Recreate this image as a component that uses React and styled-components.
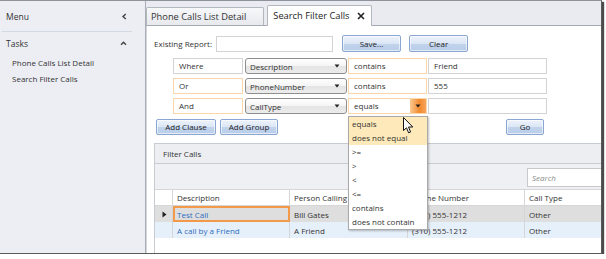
import React from "react";
import styled, { createGlobalStyle, css } from "styled-components";

const GlobalStyle = createGlobalStyle`
  html, body { margin: 0; padding: 0; background: #ffffff; }
  body { font-family: "Open Sans", "Noto Sans", "Liberation Sans", sans-serif; font-size: 8px; color: #333; }
  * { box-sizing: border-box; }
`;

const Frame = styled.div`
  width: 602px;
  height: 254px;
  display: flex;
  border-top: 1px solid #8e939b;
  border-right: 1px solid #5a5a5a;
  border-bottom: 1px solid #5a5a5a;
  box-shadow: 2px 2px 1px 0 rgba(30, 30, 30, 0.8);
  position: relative;
`;

const Sidebar = styled.aside`
  width: 146px;
  flex: none;
  background: #eceef3;
  border-right: 1px solid #a9adb5;
  display: flex;
  flex-direction: column;
`;

const SideHeader = styled.div`
  height: 31px;
  margin: 0 13px 0 2px;
  padding: 0 4px;
  display: flex;
  align-items: center;
  justify-content: space-between;
  border-bottom: 1px solid #d3d9e3;
  font-size: 8.5px;
  color: #333;
`;

const SideSection = styled.div`
  height: 22px;
  margin: 0 13px 0 2px;
  padding: 0 5px 0 4px;
  display: flex;
  align-items: center;
  justify-content: space-between;
  font-size: 8.5px;
  color: #333;
`;

const SideItems = styled.ul`
  list-style: none;
  margin: 1px 0 0;
  padding: 0 0 0 12px;
  display: flex;
  flex-direction: column;
`;

const SideItem = styled.li`
  height: 16px;
  line-height: 16px;
  font-size: 8px;
  color: #333;
`;

const Main = styled.main`
  flex: 1;
  display: flex;
  flex-direction: column;
  min-width: 0;
`;

const TabStrip = styled.div`
  height: 25px;
  flex: none;
  background: #e9ebf0;
  border-bottom: 1px solid #a6aab2;
  display: flex;
  align-items: flex-end;
  gap: 3px;
`;

const Tab = styled.div`
  height: 18px;
  display: flex;
  align-items: center;
  gap: 7px;
  padding: 0 17px 0 4px;
  font-size: 9.3px;
  color: #333;
  border: 1px solid #b3b7be;
  border-bottom: none;
  border-radius: 2px 2px 0 0;
  background: linear-gradient(#f7f8fa, #e7e9ed);
  ${(p) =>
    p.$active &&
    css`
      height: 21px;
      margin-bottom: -1px;
      padding: 0 6px 1px 5px;
      background: #ffffff;
      color: #222;
    `}
`;

const Content = styled.section`
  flex: 1;
  background: #ffffff;
  border-left: 1px solid #d2d6dc;
  display: flex;
  flex-direction: column;
  padding: 9px 0 0 7px;
  min-height: 0;
`;

const ReportRow = styled.div`
  height: 17px;
  display: flex;
  align-items: center;
`;

const Label = styled.span`
  font-size: 8px;
  color: #333;
  margin-right: 4px;
`;

const TextBox = styled.div`
  width: ${(p) => p.$w}px;
  height: 16px;
  flex: none;
  border: 1px solid ${(p) => (p.$accent ? "#fcd6ab" : "#d3d3d3")};
  background: #fff;
  padding: 0 5px;
  font-size: 8px;
  line-height: 14px;
  color: #333;
  white-space: nowrap;
  overflow: hidden;
`;

const BlueButton = styled.button`
  width: ${(p) => p.$w}px;
  height: ${(p) => p.$h || 16}px;
  flex: none;
  margin-left: ${(p) => p.$ml || 0}px;
  border: 1px solid #8aa7d4;
  border-radius: 2px;
  background: linear-gradient(#eef3fb 0%, #dbe6f5 50%, #c2d4ec 51%, #b9cdea 100%);
  font-family: inherit;
  font-size: 8px;
  color: #222;
  padding: 0;
  line-height: 1;
  box-shadow: inset 0 0 0 1px rgba(255, 255, 255, 0.6);
`;

const Clauses = styled.div`
  margin-top: 6px;
  padding-left: 19px;
  display: flex;
  flex-direction: column;
  gap: 4px;
`;

const ClauseRow = styled.div`
  display: flex;
  gap: 1px;
  height: 16px;
`;

const Select = styled.div`
  width: 102px;
  height: 16px;
  flex: none;
  margin-left: 1px;
  border: 1px solid #8e8e8e;
  border-radius: 3px;
  background: linear-gradient(#ffffff 0%, #f4f4f4 50%, #e4e4e4 51%, #ececec 100%);
  display: flex;
  align-items: center;
  justify-content: space-between;
  padding: 0 6px 0 4px;
  font-size: 8px;
  color: #333;
`;

const Combo = styled.div`
  position: relative;
  width: 79px;
  height: 16px;
  flex: none;
  border: 1px solid #fcd6ab;
  background: #fff;
  display: flex;
  align-items: stretch;
`;

const ComboText = styled.span`
  flex: 1;
  padding-left: 5px;
  line-height: 14px;
  font-size: 8px;
  color: #333;
`;

const ComboButton = styled.span`
  width: 16px;
  display: flex;
  align-items: center;
  justify-content: center;
  background: linear-gradient(90deg, #fbc88f, #f28a2e 60%, #f6a45a);
`;

const DropList = styled.ul`
  position: absolute;
  left: -1px;
  top: 17px;
  width: 80px;
  margin: 0;
  padding: 0;
  list-style: none;
  background: #fff;
  border: 1px solid #a9a9a9;
  box-shadow: 1px 1px 2px rgba(0, 0, 0, 0.25);
  z-index: 5;
`;

const DropItem = styled.li`
  height: 14px;
  line-height: 14px;
  padding-left: 3px;
  font-size: 8px;
  color: #333;
  background: ${(p) => (p.$hot ? "#fde9b9" : "#fff")};
  white-space: nowrap;
`;

const Cursor = styled.svg`
  position: absolute;
  left: 54px;
  top: 18px;
  z-index: 6;
`;

const ButtonRow = styled.div`
  width: 390px;
  margin-top: 5px;
  padding-left: 2px;
  height: 16px;
  display: flex;
  gap: 4px;
`;

const Spacer = styled.span`
  flex: 1;
`;

const Panel = styled.div`
  flex: 1;
  margin-top: 8px;
  border-top: 1px solid #c7cbd2;
  border-left: 1px solid #c7cbd2;
  display: flex;
  flex-direction: column;
  min-height: 0;
`;

const PanelHeader = styled.div`
  height: 20px;
  flex: none;
  background: #eceef2;
  border-bottom: 1px solid #c9ccd2;
  padding-left: 8px;
  display: flex;
  align-items: center;
  font-size: 8px;
  color: #333;
`;

const Toolbar = styled.div`
  height: 25px;
  flex: none;
  background: #eef0f3;
  display: flex;
  justify-content: flex-end;
  align-items: flex-start;
  padding-top: 4px;
`;

const SearchBox = styled.div`
  width: 74px;
  height: 19px;
  border: 1px solid #c8c8c8;
  border-right: none;
  background: #fff;
  padding-left: 4px;
  font-size: 8px;
  line-height: 17px;
  font-style: italic;
  color: #8a8a8a;
`;

const Grid = styled.div`
  display: grid;
  grid-template-columns: 18px 117px 118px 117px 1fr;
  grid-auto-rows: 16px;
  background: #fff;
  flex: 1;
  align-content: start;
  border-top: 1px solid #d6d6d6;
`;

const Cell = styled.div`
  display: flex;
  align-items: center;
  padding-left: 4px;
  font-size: 8px;
  white-space: nowrap;
  overflow: hidden;
  color: ${(p) => (p.$link ? "#2d6cc0" : "#333")};
  border-right: ${(p) => (p.$last ? "none" : "1px solid #d6d6d6")};
  background: ${(p) => p.$bg || "#fff"};
  ${(p) =>
    p.$head &&
    css`
      border-bottom: 1px solid #d6d6d6;
    `}
  ${(p) =>
    p.$mark &&
    css`
      padding-left: 7px;
    `}
  ${(p) =>
    p.$focus &&
    css`
      border: 2px solid #f2994a;
      padding-left: 2px;
    `}
`;

const Chevron = ({ dir }) => (
  <svg width="7" height="7" viewBox="0 0 7 7">
    {dir === "left" ? (
      <path d="M4.8 1 L2 3.5 L4.8 6" fill="none" stroke="#444" strokeWidth="1.4" />
    ) : (
      <path d="M1 4.8 L3.5 2.2 L6 4.8" fill="none" stroke="#444" strokeWidth="1.4" />
    )}
  </svg>
);

const DownArrow = () => (
  <svg width="6" height="4" viewBox="0 0 6 4">
    <path d="M0.5 0.5 H5.5 L3 3.5 Z" fill="#222" />
  </svg>
);

const CloseX = () => (
  <svg width="8" height="8" viewBox="0 0 8 8">
    <path d="M1 1 L7 7 M7 1 L1 7" stroke="#222" strokeWidth="1.6" />
  </svg>
);

const RowMark = () => (
  <svg width="5" height="7" viewBox="0 0 5 7">
    <path d="M0.5 0.5 L4.5 3.5 L0.5 6.5 Z" fill="#222" />
  </svg>
);

const clauses = [
  { join: "Where", field: "Description", op: "contains", value: "Friend", joinAccent: false },
  { join: "Or", field: "PhoneNumber", op: "contains", value: "555", joinAccent: true },
];

const options = ["equals", "does not equal", ">=", ">", "<", "<=", "contains", "does not contain"];

const rows = [
  { desc: "Test Call", person: "Bill Gates", phone: "(555) 555-1212", type: "Other", bg: "#dedede", selected: true },
  { desc: "A call by a Friend", person: "A Friend", phone: "(310) 555-1212", type: "Other", bg: "#e6f0fa" },
];

export default function App() {
  return (
    <>
      <GlobalStyle />
      <Frame>
        <Sidebar>
          <SideHeader>
            <span>Menu</span>
            <Chevron dir="left" />
          </SideHeader>
          <SideSection>
            <span>Tasks</span>
            <Chevron dir="up" />
          </SideSection>
          <SideItems>
            <SideItem>Phone Calls List Detail</SideItem>
            <SideItem>Search Filter Calls</SideItem>
          </SideItems>
        </Sidebar>
        <Main>
          <TabStrip>
            <Tab>Phone Calls List Detail</Tab>
            <Tab $active>
              Search Filter Calls <CloseX />
            </Tab>
          </TabStrip>
          <Content>
            <ReportRow>
              <Label>Existing Report:</Label>
              <TextBox $w={117} />
              <BlueButton $w={59} $h={17} $ml={9}>Save...</BlueButton>
              <BlueButton $w={59} $h={17} $ml={8}>Clear</BlueButton>
            </ReportRow>
            <Clauses>
              {clauses.map((c) => (
                <ClauseRow key={c.join}>
                  <TextBox $w={70} $accent={c.joinAccent}>{c.join}</TextBox>
                  <Select>
                    <span>{c.field}</span>
                    <DownArrow />
                  </Select>
                  <TextBox $w={79} $accent>{c.op}</TextBox>
                  <TextBox $w={119}>{c.value}</TextBox>
                </ClauseRow>
              ))}
              <ClauseRow>
                <TextBox $w={70} $accent>And</TextBox>
                <Select>
                  <span>CallType</span>
                  <DownArrow />
                </Select>
                <Combo>
                  <ComboText>equals</ComboText>
                  <ComboButton>
                    <DownArrow />
                  </ComboButton>
                  <DropList>
                    {options.map((o, i) => (
                      <DropItem key={o} $hot={i < 2}>{o}</DropItem>
                    ))}
                  </DropList>
                  <Cursor width="11" height="17" viewBox="0 0 11 17">
                    <path
                      d="M0.5 0.5 L0.5 13.5 L3.5 10.8 L5.6 15.8 L7.6 15 L5.5 10 L9.8 10 Z"
                      fill="#fff"
                      stroke="#111"
                      strokeWidth="1"
                      strokeLinejoin="round"
                    />
                  </Cursor>
                </Combo>
                <TextBox $w={119} />
              </ClauseRow>
            </Clauses>
            <ButtonRow>
              <BlueButton $w={60}>Add Clause</BlueButton>
              <BlueButton $w={58}>Add Group</BlueButton>
              <Spacer />
              <BlueButton $w={38}>Go</BlueButton>
            </ButtonRow>
            <Panel>
              <PanelHeader>Filter Calls</PanelHeader>
              <Toolbar>
                <SearchBox>Search</SearchBox>
              </Toolbar>
              <Grid>
                <Cell $head />
                <Cell $head>Description</Cell>
                <Cell $head>Person Calling</Cell>
                <Cell $head>Phone Number</Cell>
                <Cell $head $last>Call Type</Cell>
                {rows.map((r) => (
                  <React.Fragment key={r.desc}>
                    <Cell $bg={r.bg} $mark>{r.selected && <RowMark />}</Cell>
                    <Cell $bg={r.bg} $link $focus={r.selected}>{r.desc}</Cell>
                    <Cell $bg={r.bg}>{r.person}</Cell>
                    <Cell $bg={r.bg}>{r.phone}</Cell>
                    <Cell $bg={r.bg} $last>{r.type}</Cell>
                  </React.Fragment>
                ))}
              </Grid>
            </Panel>
          </Content>
        </Main>
      </Frame>
    </>
  );
}
